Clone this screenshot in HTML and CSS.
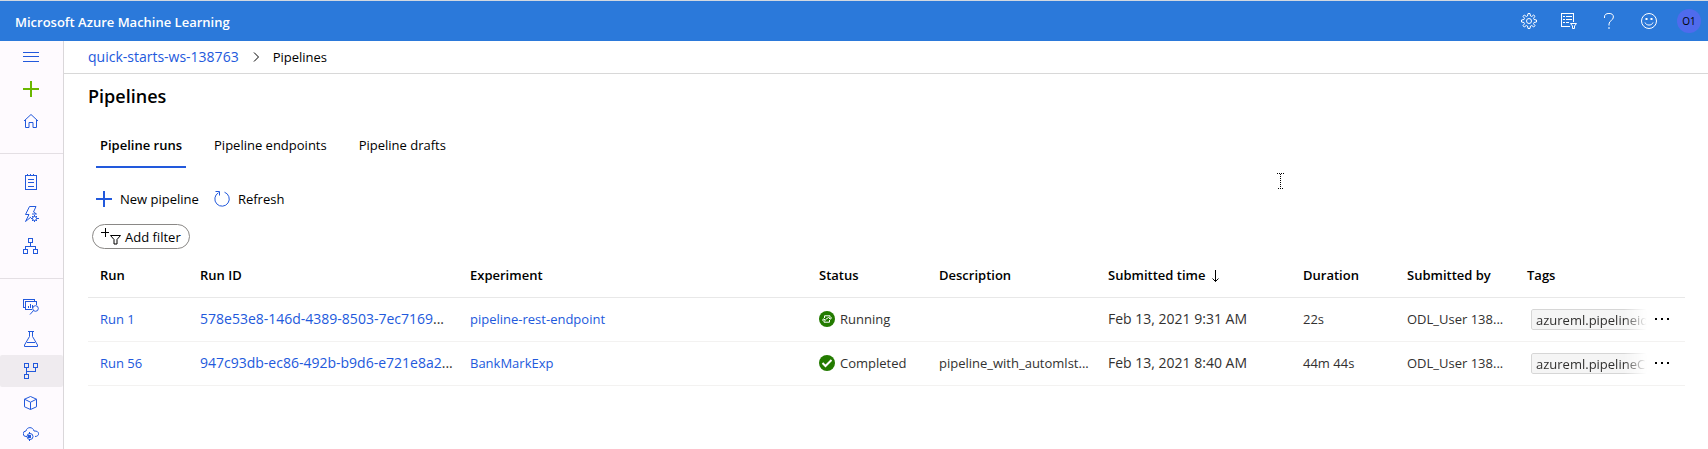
FILE: index.html
```html
<!DOCTYPE html>
<html lang="en">
<head>
<meta charset="utf-8">
<title>Pipelines - Microsoft Azure Machine Learning</title>
<link rel="stylesheet" href="styles.css">
</head>
<body>
<div class="shell">
  <header class="topbar">
    <span class="brand">Microsoft Azure Machine Learning</span>
    <div class="topbar-actions">
      <button class="top-btn" type="button" aria-label="Settings">
        <svg class="icon" viewBox="0 0 16 16"><circle cx="8" cy="8" r="2.5"/><path d="M7 .5h2l.5 2.500 1.200.5 2-1.500 1.300 1.300-1.500 2 .5 1.200 2.500.5v2l-2.500.5-.5 1.200 1.500 2-1.300 1.300-2-1.500-1.200.5-.5 2.500H7l-.5-2.500-1.200-.5-2 1.500L2 12.700l1.500-2L3 9.500.5 9V7L3 6.500l.5-1.200-1.500-2L3.300 2l2 1.500L6.500 3z"/></svg>
      </button>
      <button class="top-btn" type="button" aria-label="Directory filter">
        <svg class="icon" viewBox="0 0 16 16"><path class="crisp" d="M9 13.500H.5V.5h12V9M2 3.500h2M5 3.500h6M2 6.500h2M5 6.500h6M2 9.500h2M5 9.500h3"/><path d="M9.500 10.500h6l-2 2.500v2.500h-2V13z"/></svg>
      </button>
      <button class="top-btn" type="button" aria-label="Help">
        <svg class="icon" viewBox="0 0 16 16"><path d="M3.500 5V4a4.400 3.500 0 0 1 8.900 0c0 3.500-4.400 3.500-4.400 7v1.500M8 14v2"/></svg>
      </button>
      <button class="top-btn" type="button" aria-label="Feedback">
        <svg class="icon" viewBox="0 0 16 16"><circle cx="8" cy="8" r="7.500"/><path d="M4 9.500c1.200 3.400 6.800 3.400 8 0"/><path class="solid" d="M4.500 5h2v2h-2zM9.500 5h2v2h-2z"/></svg>
      </button>
      <button class="avatar" type="button" aria-label="Account O1">O1</button>
    </div>
  </header>

  <div class="body">
    <nav class="rail" aria-label="Workspace">
      <button class="rail-item" type="button" aria-label="Toggle menu">
        <svg class="icon crisp" viewBox="0 0 16 16"><path d="M0 3.500h16M0 7.500h16M0 12.500h16"/></svg>
      </button>
      <button class="rail-item create" type="button" aria-label="Create new">
        <svg class="icon crisp" viewBox="0 0 16 16"><path d="M0 8h16M8 0v16"/></svg>
      </button>
      <a class="rail-item" href="#home" aria-label="Home">
        <svg class="icon" viewBox="0 0 16 16"><path d="M1 8l7-6.500L15 8M2.500 7v7.500h3.500V9.500h4v5h3.500V7"/></svg>
      </a>
      <hr class="rail-line">
      <a class="rail-item" href="#notebooks" aria-label="Notebooks">
        <svg class="icon crisp" viewBox="0 0 16 16"><path d="M2.500 1.500h11v14h-11zM4.500 0v2M7.500 0v2M10.500 0v2M5 5.500h6M5 8.500h6M5 12.500h6"/></svg>
      </a>
      <a class="rail-item" href="#automl" aria-label="Automated ML">
        <svg class="icon" viewBox="0 0 16 16"><path d="M9 8h4.500l-3-2L13 .5H6.500L2.500 8.500h3.500L2.500 15.500 8 11"/><circle cx="11.500" cy="12.500" r="2"/><path d="M11.500 9v1.500M11.500 14.500V16M8 12.500h1.500M13.500 12.500H16M9 10l1 1M13 14l1 1M14 10l-1 1M10 14l-1 1"/></svg>
      </a>
      <a class="rail-item" href="#designer" aria-label="Designer">
        <svg class="icon crisp" viewBox="0 0 16 16"><path d="M5.500.5h4v4h-4zM.5 11.500h4v4h-4zM10.500 11.500h4v4h-4zM7.500 5v3M2.500 11V8.500h10V11"/></svg>
      </a>
      <hr class="rail-line">
      <a class="rail-item" href="#datasets" aria-label="Datasets">
        <svg class="icon" viewBox="0 0 16 16"><path class="crisp" d="M2 8.500H.5V.5h11V2M9 10.500H2.500v-8h11V6M5.500 9V7M7.500 9V5M9.500 9V6"/><circle cx="12.500" cy="9.500" r="2.800"/><path d="M10.500 11.500L7 15.500"/></svg>
      </a>
      <a class="rail-item" href="#experiments" aria-label="Experiments">
        <svg class="icon" viewBox="0 0 16 16"><path d="M5 .5h6M6.500.5v5L1.500 14v1.500h13V14L9.500 5.500v-5M4 11.500h8"/></svg>
      </a>
      <a class="rail-item current" href="#pipelines" aria-label="Pipelines" aria-current="page">
        <svg class="icon crisp" viewBox="0 0 16 16"><path d="M1.500.5h4v4h-4zM10.500.5h4v4h-4zM1.500 11.500h4v4h-4zM3.500 5v6M12.500 5v3.500h-9"/></svg>
      </a>
      <a class="rail-item" href="#models" aria-label="Models">
        <svg class="icon" viewBox="0 0 16 16"><path d="M7.500 1.500l6 2.700v7.600l-6 2.700-6-2.700V4.200zM1.500 4.200l6 3 6-3M7.500 7.200v7.300"/></svg>
      </a>
      <a class="rail-item" href="#endpoints" aria-label="Endpoints">
        <svg class="icon" viewBox="0 0 16 16"><path d="M4 9.500H3a2.600 2.600 0 0 1 0-5.500c.8-4.500 7-4.500 8 0 6-.5 6 5.500 1 5.500"/><circle cx="7" cy="9.500" r="3"/><path d="M6.500 5v2M6.500 12v2"/><path class="solid" d="M5 8h3v3H5z"/></svg>
      </a>
    </nav>

    <main class="main">
      <nav class="crumbs" aria-label="Breadcrumb">
        <a class="numeric" href="#workspace">quick-starts-ws-138763</a>
        <svg class="chevron" viewBox="0 0 6 10"><path d="M1 .5L5.500 5 1 9.500"/></svg>
        <span>Pipelines</span>
      </nav>

      <div class="content">
        <h1 class="title">Pipelines</h1>

        <div class="tabs" role="tablist">
          <button class="tab selected" type="button" role="tab" aria-selected="true">Pipeline runs</button>
          <button class="tab" type="button" role="tab" aria-selected="false">Pipeline endpoints</button>
          <button class="tab" type="button" role="tab" aria-selected="false">Pipeline drafts</button>
        </div>

        <div class="toolbar">
          <button class="command" type="button">
            <svg class="icon thick crisp" viewBox="0 0 16 16"><path d="M0 8h16M8 0v16"/></svg>New pipeline
          </button>
          <button class="command" type="button">
            <svg class="icon" viewBox="0 0 16 16"><path d="M10.500 1.200a7.200 7.200 0 1 1-6 .5M1.500.5h4v4"/></svg>Refresh
          </button>
        </div>

        <button class="filter" type="button">
          <svg class="filter-icon" viewBox="0 0 20 17"><path class="crisp" d="M0 4.500h8M4.500 0v9"/><path d="M9.500 7.500h10L16 11.500v4.500h-3v-4.500z"/></svg>Add filter
        </button>

        <table class="runs">
          <colgroup>
            <col class="c-run"><col class="c-id"><col class="c-exp"><col class="c-status"><col class="c-desc">
            <col class="c-time"><col class="c-dur"><col class="c-by"><col class="c-tags"><col class="c-more">
          </colgroup>
          <thead>
            <tr>
              <th>Run</th><th>Run ID</th><th>Experiment</th><th>Status</th><th>Description</th>
              <th>Submitted time <svg class="sort" viewBox="0 0 7 12"><path d="M3.500 0v11.500M.5 8.500l3 3 3-3"/></svg></th>
              <th>Duration</th><th>Submitted by</th><th>Tags</th><th aria-label="Actions"></th>
            </tr>
          </thead>
          <tbody>
            <tr>
              <td><a href="#run1">Run 1</a></td>
              <td class="numeric"><a href="#run1">578e53e8-146d-4389-8503-7ec7169</a>...</td>
              <td><a href="#exp1">pipeline-rest-endpoint</a></td>
              <td><span class="status"><svg class="badge" viewBox="0 0 16 16"><circle cx="8" cy="8" r="8"/><path d="M5.500 7V4.800h5.500v3M9.500 6.500L11.200 8.200 13 6.500M10.500 9v2.200H5v-3M6.500 9.500L4.800 7.800 3 9.500M6.500 8.500l3-2"/></svg>Running</span></td>
              <td></td>
              <td class="numeric">Feb 13, 2021 9:31 AM</td>
              <td>22s</td>
              <td>ODL_User 138...</td>
              <td class="tag-cell"><span class="tag">azureml.pipelineid</span></td>
              <td class="more-cell"><button class="more" type="button" aria-label="More actions for Run 1"><svg viewBox="0 0 14 2"><path d="M0 0h2v2H0zM6 0h2v2H6zM12 0h2v2h-2z"/></svg></button></td>
            </tr>
            <tr>
              <td><a href="#run56">Run 56</a></td>
              <td class="numeric"><a href="#run56">947c93db-ec86-492b-b9d6-e721e8a2</a>...</td>
              <td><a href="#exp56">BankMarkExp</a></td>
              <td><span class="status"><svg class="badge check" viewBox="0 0 16 16"><circle cx="8" cy="8" r="8"/><path d="M3.500 8l3 3 6-6"/></svg>Completed</span></td>
              <td>pipeline_with_automlst...</td>
              <td class="numeric">Feb 13, 2021 8:40 AM</td>
              <td>44m 44s</td>
              <td>ODL_User 138...</td>
              <td class="tag-cell"><span class="tag">azureml.pipelineC</span></td>
              <td class="more-cell"><button class="more" type="button" aria-label="More actions for Run 56"><svg viewBox="0 0 14 2"><path d="M0 0h2v2H0zM6 0h2v2H6zM12 0h2v2h-2z"/></svg></button></td>
            </tr>
          </tbody>
        </table>
      </div>
    </main>
  </div>
  <svg class="pointer" viewBox="0 0 7 16"><path d="M0 .5h7M1 15.500h5M3.500 1v14"/></svg>
</div>
</body>
</html>
```
FILE: styles.css
```css
* { box-sizing: border-box; }

body {
  margin: 0;
  background: #fff;
  color: #000;
  font: 13px/20px "Open Sans", "Noto Sans", sans-serif;
}

button {
  margin: 0;
  padding: 0;
  border: 0;
  background: none;
  color: inherit;
  font: inherit;
}

a { color: #2259dc; text-decoration: none; }

svg { display: block; flex: none; fill: none; stroke: currentColor; }
.crisp { shape-rendering: crispEdges; }
.solid { fill: currentColor; stroke: none; }
.icon { width: 16px; height: 16px; }
.thick { stroke-width: 2; }
.numeric { font-size: 14px; }

.shell {
  position: relative;
  display: flex;
  flex-direction: column;
  height: 100vh;
  overflow: hidden;
}

.topbar {
  display: flex;
  flex: none;
  align-items: center;
  justify-content: space-between;
  height: 41px;
  padding: 0 7px 0 15px;
  border-top: 1px solid #d2d8e0;
  background: #2b79da;
  color: #fff;
}
.brand { padding-top: 2px; font-weight: 600; }
.topbar-actions { display: flex; align-items: center; }
.top-btn { display: grid; place-items: center; width: 40px; height: 40px; }
.avatar {
  width: 24px;
  height: 24px;
  margin-left: 8px;
  border-radius: 50%;
  background: #4f6bed;
  color: #000;
  font-size: 10px;
  line-height: 24px;
}

.body { display: flex; flex: 1; min-height: 0; }

.rail {
  flex: none;
  width: 64px;
  overflow: hidden;
  border-right: 1px solid #dad7da;
  background: #fefafe;
}
.rail-item {
  display: flex;
  align-items: center;
  width: 100%;
  height: 32px;
  padding-left: 23px;
  color: #2259dc;
}
.create { color: #6bb700; stroke-width: 2; }
.current { border-radius: 2px; background: #efebef; }
.rail-line {
  height: 1px;
  margin: 16px 0 12px;
  border: 0;
  background: #e4dfe4;
}

.main { flex: 1; min-width: 0; }
.crumbs {
  display: flex;
  align-items: center;
  gap: 14px;
  height: 33px;
  padding-left: 24px;
  border-bottom: 1px solid #d8d8d8;
}
.chevron { width: 6px; height: 10px; }

.content { padding: 10px 23px 0 24px; }
.title { margin: 0; font-size: 18px; font-weight: 600; line-height: 24px; }

.tabs { display: flex; gap: 24px; margin: 16px 0 0 8px; }
.tab {
  height: 44px;
  padding: 0 4px;
  border-bottom: 2px solid transparent;
}
.selected { border-color: #2259dc; font-weight: 600; }

.toolbar { display: flex; gap: 15px; margin: 19px 0 0 8px; }
.command { display: flex; align-items: center; gap: 8px; height: 24px; }
.command .icon { color: #2259dc; }

.filter {
  display: flex;
  align-items: center;
  gap: 4px;
  height: 25px;
  margin: 13px 0 0 4px;
  padding: 0 8px;
  border: 1px solid #8a8886;
  border-radius: 13px;
}
.filter-icon { width: 20px; height: 17px; }

.runs {
  width: 100%;
  margin-top: 4px;
  border-collapse: collapse;
  table-layout: fixed;
}
.c-run { width: 100px; }
.c-id { width: 270px; }
.c-status { width: 120px; }
.c-desc { width: 169px; }
.c-time { width: 195px; }
.c-dur { width: 104px; }
.c-by { width: 120px; }
.c-tags { width: 132px; }
.c-more { width: 38px; }
.runs th,
.runs td {
  height: 44px;
  padding: 0 0 0 12px;
  overflow: hidden;
  border-bottom: 1px solid #f3f2f1;
  text-align: left;
  white-space: nowrap;
}
.runs th { border-color: #e8e8e8; font-weight: 600; }
.runs td { color: #323130; }

.sort { display: inline-block; width: 7px; height: 12px; margin-left: 3px; vertical-align: -2px; }
.status { display: flex; align-items: center; gap: 5px; }
.badge { width: 16px; height: 16px; fill: #237b00; stroke: none; }
.badge path { fill: none; stroke: #fff; }
.check path { stroke-width: 2; }

.runs .tag-cell { padding: 0 0 0 16px; }
.tag {
  display: block;
  height: 21px;
  padding-left: 4px;
  overflow: hidden;
  border: 1px solid #d6d6d6;
  border-radius: 2px;
  background: #f5f5f5;
  line-height: 21px;
  mask-image: linear-gradient(to right, #000 80%, transparent);
}
.runs .more-cell { padding: 0 0 0 8px; }
.more { display: block; padding: 8px 0; color: #000; }
.more svg { width: 14px; height: 2px; fill: currentColor; stroke: none; }

/* Text pointer floating over the page */
.pointer {
  position: absolute;
  right: 424px;
  top: 173px;
  width: 7px;
  height: 16px;
  stroke-dasharray: 1 1;
}
```
